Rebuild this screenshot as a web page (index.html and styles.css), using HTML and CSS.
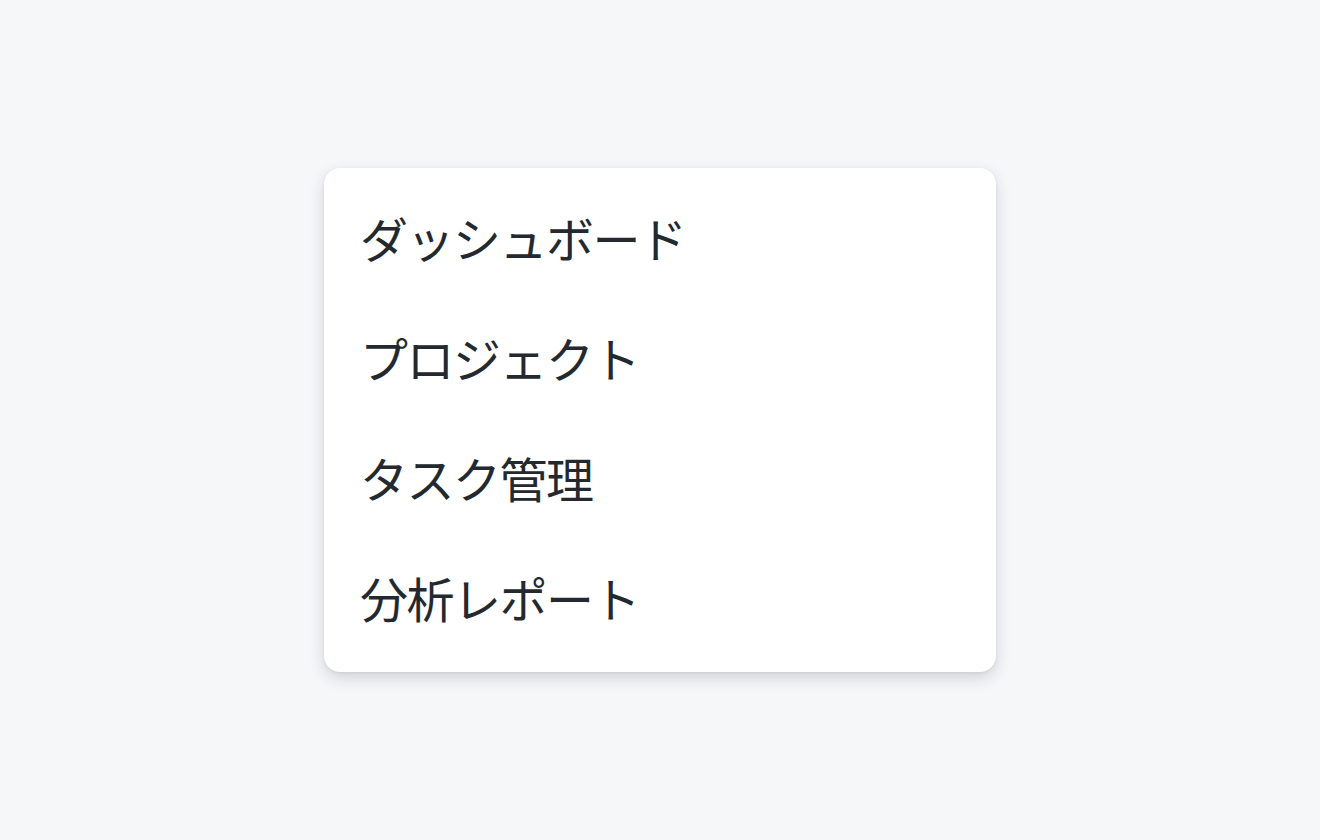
FILE: index.html
```html
<!DOCTYPE html>
<html lang="ja">
<head>
<meta charset="utf-8">
<link rel="stylesheet" href="styles.css">
</head>
<body>
<div class="page">
  <ul class="menu">
    <li class="item">ダッシュボード</li>
    <li class="item">プロジェクト</li>
    <li class="item">タスク管理</li>
    <li class="item">分析レポート</li>
  </ul>
</div>
</body>
</html>
```
FILE: styles.css
```css
html, body {
  margin: 0;
  padding: 0;
}
body {
  background: #f6f7f9;
  font-family: "Noto Sans CJK JP", "Noto Sans", sans-serif;
  color: #24292f;
}
.page {
  width: 1320px;
  height: 840px;
  display: flex;
  align-items: center;
  justify-content: center;
}
.menu {
  list-style: none;
  margin: 0;
  padding: 12px 0;
  width: 672px;
  box-sizing: border-box;
  background: #ffffff;
  border-radius: 16px;
  box-shadow: 0 6px 16px rgba(20, 30, 50, 0.16), 0 1px 3px rgba(20, 30, 50, 0.08);
}
.item {
  height: 120px;
  box-sizing: border-box;
  display: flex;
  align-items: center;
  padding-left: 36px;
  padding-bottom: 6px;
  font-size: 48px;
  line-height: 1;
  letter-spacing: -1.5px;
}
```
